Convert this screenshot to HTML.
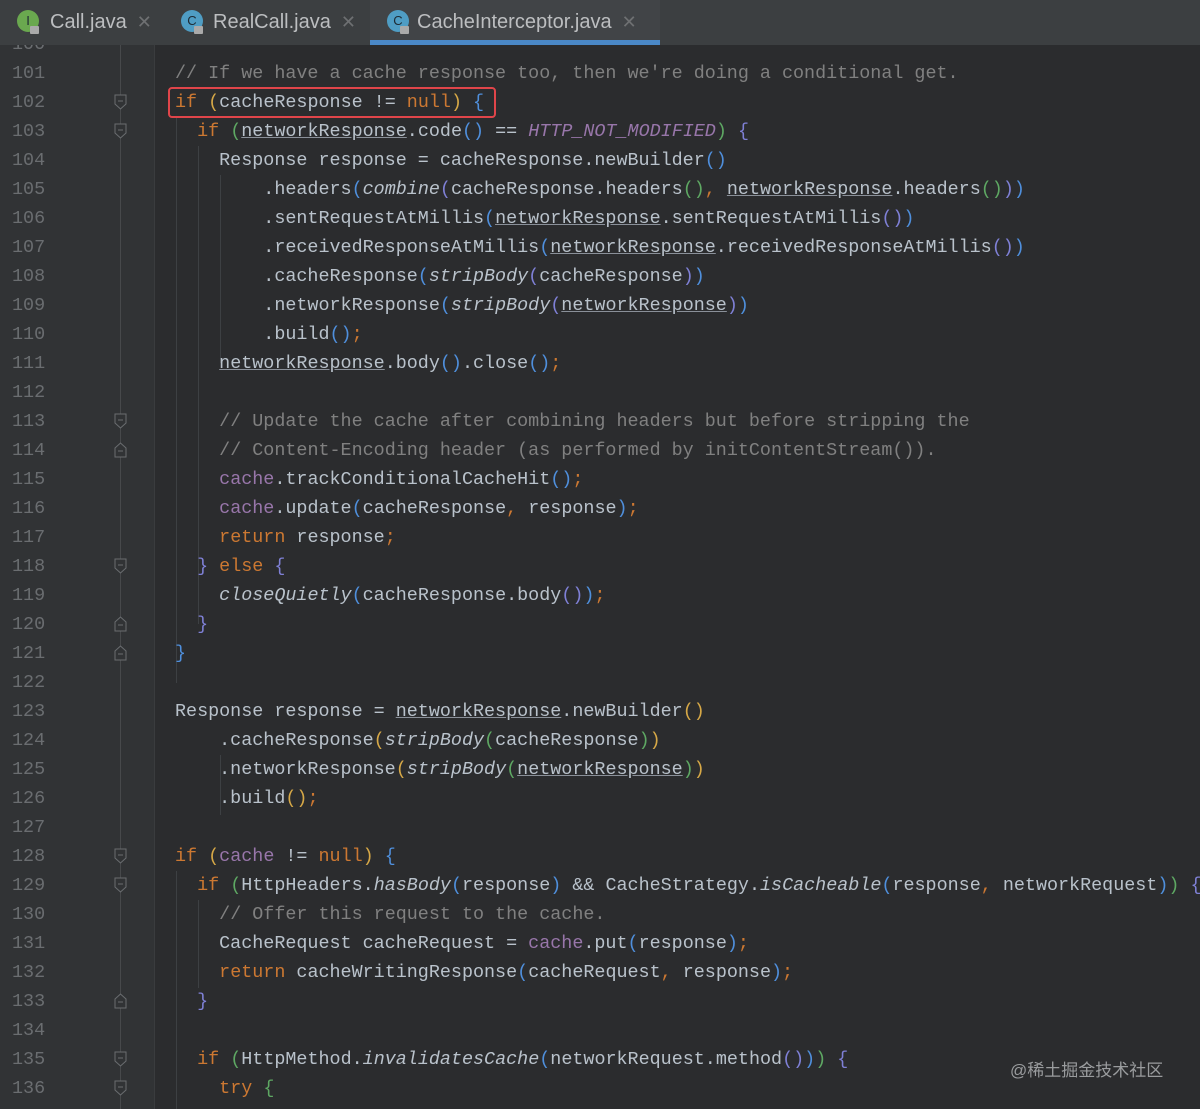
<!DOCTYPE html>
<html><head><meta charset="utf-8"><style>
*{margin:0;padding:0;box-sizing:border-box}
body{width:1200px;height:1109px;overflow:hidden;background:#2b2c2e;position:relative;font-family:"Liberation Mono",monospace}
#tabs{position:absolute;left:0;top:0;width:1200px;height:45px;background:#3c3f41;font-family:"Liberation Sans",sans-serif;font-size:20px;color:#bcbec0}
.tab{position:absolute;top:0;height:45px;line-height:44px}
.tab .x{color:#6e7072;margin-left:10px;font-size:18px}
.ic{position:absolute;top:10px;width:22px;height:22px;border-radius:50%;color:#1d2a33;font-size:13px;text-align:center;line-height:22px}
.lk{position:absolute;width:9px;height:8px;background:#aaa;border-radius:1px}
#gutter{position:absolute;left:0;top:45px;width:155px;height:1064px;background:#313335;border-right:1px solid #3a3c3e}
.ln{position:absolute;left:12px;width:40px;color:#6a6d70;font-size:18.4px;line-height:29px}
#foldline{position:absolute;left:120px;top:45px;width:1px;height:1064px;background:#47494b}
.fm{position:absolute;left:114px}
#code{position:absolute;left:175px;top:45px;width:1025px;height:1064px;overflow:hidden}
.l{position:absolute;left:0;white-space:pre;font-size:18.4px;line-height:29px;color:#b9c2cb}
.k{color:#cc7832}.c{color:#808080}.f{color:#9876aa}.cs{color:#9876aa;font-style:italic}.i{font-style:italic}
.u{text-decoration:underline;text-decoration-color:#8a9099}
.p1{color:#d6a847}.p2{color:#5ea863}.p3{color:#4f8fdc}.p4{color:#7f80d6}
.g{position:absolute;width:1px;background:#3d4043}
#box{position:absolute;left:168px;top:87px;width:328px;height:31px;border:2px solid #e0454a;border-radius:4px}
#wm{position:absolute;left:1010px;top:1056px;font-family:"Liberation Sans","Noto Sans CJK SC",sans-serif;font-size:17px;color:#9a9c9e}
#lnums{position:absolute;left:0;top:0;width:155px;height:1109px}
</style></head><body>
<div id="gutter"></div>
<div id="foldline"></div>
<div id="code">
<div class="g" style="left:1px;top:72px;height:566px"></div>
<div class="g" style="left:23px;top:101px;height:478px"></div>
<div class="g" style="left:45px;top:130px;height:188px"></div>
<div class="g" style="left:1px;top:826px;height:240px"></div>
<div class="g" style="left:23px;top:855px;height:88px"></div>
<div class="g" style="left:45px;top:710px;height:60px"></div>
<div class="l" style="top:14px"><span class="c">// If we have a cache response too, then we're doing a conditional get.</span></div>
<div class="l" style="top:43px"><span class="k">if</span> <span class="p1">(</span>cacheResponse != <span class="k">null</span><span class="p1">)</span> <span class="p3">{</span></div>
<div class="l" style="top:72px">  <span class="k">if</span> <span class="p2">(</span><span class="u">networkResponse</span>.code<span class="p3">()</span> == <span class="cs">HTTP_NOT_MODIFIED</span><span class="p2">)</span> <span class="p4">{</span></div>
<div class="l" style="top:101px">    Response response = cacheResponse.newBuilder<span class="p3">()</span></div>
<div class="l" style="top:130px">        .headers<span class="p3">(</span><span class="i">combine</span><span class="p4">(</span>cacheResponse.headers<span class="p2">()</span><span class="k">,</span> <span class="u">networkResponse</span>.headers<span class="p2">()</span><span class="p4">)</span><span class="p3">)</span></div>
<div class="l" style="top:159px">        .sentRequestAtMillis<span class="p3">(</span><span class="u">networkResponse</span>.sentRequestAtMillis<span class="p4">()</span><span class="p3">)</span></div>
<div class="l" style="top:188px">        .receivedResponseAtMillis<span class="p3">(</span><span class="u">networkResponse</span>.receivedResponseAtMillis<span class="p4">()</span><span class="p3">)</span></div>
<div class="l" style="top:217px">        .cacheResponse<span class="p3">(</span><span class="i">stripBody</span><span class="p4">(</span>cacheResponse<span class="p4">)</span><span class="p3">)</span></div>
<div class="l" style="top:246px">        .networkResponse<span class="p3">(</span><span class="i">stripBody</span><span class="p4">(</span><span class="u">networkResponse</span><span class="p4">)</span><span class="p3">)</span></div>
<div class="l" style="top:275px">        .build<span class="p3">()</span><span class="k">;</span></div>
<div class="l" style="top:304px">    <span class="u">networkResponse</span>.body<span class="p3">()</span>.close<span class="p3">()</span><span class="k">;</span></div>
<div class="l" style="top:362px">    <span class="c">// Update the cache after combining headers but before stripping the</span></div>
<div class="l" style="top:391px">    <span class="c">// Content-Encoding header (as performed by initContentStream()).</span></div>
<div class="l" style="top:420px">    <span class="f">cache</span>.trackConditionalCacheHit<span class="p3">()</span><span class="k">;</span></div>
<div class="l" style="top:449px">    <span class="f">cache</span>.update<span class="p3">(</span>cacheResponse<span class="k">,</span> response<span class="p3">)</span><span class="k">;</span></div>
<div class="l" style="top:478px">    <span class="k">return</span> response<span class="k">;</span></div>
<div class="l" style="top:507px">  <span class="p4">}</span> <span class="k">else</span> <span class="p4">{</span></div>
<div class="l" style="top:536px">    <span class="i">closeQuietly</span><span class="p3">(</span>cacheResponse.body<span class="p4">()</span><span class="p3">)</span><span class="k">;</span></div>
<div class="l" style="top:565px">  <span class="p4">}</span></div>
<div class="l" style="top:594px"><span class="p3">}</span></div>
<div class="l" style="top:652px">Response response = <span class="u">networkResponse</span>.newBuilder<span class="p1">()</span></div>
<div class="l" style="top:681px">    .cacheResponse<span class="p1">(</span><span class="i">stripBody</span><span class="p2">(</span>cacheResponse<span class="p2">)</span><span class="p1">)</span></div>
<div class="l" style="top:710px">    .networkResponse<span class="p1">(</span><span class="i">stripBody</span><span class="p2">(</span><span class="u">networkResponse</span><span class="p2">)</span><span class="p1">)</span></div>
<div class="l" style="top:739px">    .build<span class="p1">()</span><span class="k">;</span></div>
<div class="l" style="top:797px"><span class="k">if</span> <span class="p1">(</span><span class="f">cache</span> != <span class="k">null</span><span class="p1">)</span> <span class="p3">{</span></div>
<div class="l" style="top:826px">  <span class="k">if</span> <span class="p2">(</span>HttpHeaders.<span class="i">hasBody</span><span class="p3">(</span>response<span class="p3">)</span> &amp;&amp; CacheStrategy.<span class="i">isCacheable</span><span class="p3">(</span>response<span class="k">,</span> networkRequest<span class="p3">)</span><span class="p2">)</span> <span class="p4">{</span></div>
<div class="l" style="top:855px">    <span class="c">// Offer this request to the cache.</span></div>
<div class="l" style="top:884px">    CacheRequest cacheRequest = <span class="f">cache</span>.put<span class="p3">(</span>response<span class="p3">)</span><span class="k">;</span></div>
<div class="l" style="top:913px">    <span class="k">return</span> cacheWritingResponse<span class="p3">(</span>cacheRequest<span class="k">,</span> response<span class="p3">)</span><span class="k">;</span></div>
<div class="l" style="top:942px">  <span class="p4">}</span></div>
<div class="l" style="top:1000px">  <span class="k">if</span> <span class="p2">(</span>HttpMethod.<span class="i">invalidatesCache</span><span class="p3">(</span>networkRequest.method<span class="p4">()</span><span class="p3">)</span><span class="p2">)</span> <span class="p4">{</span></div>
<div class="l" style="top:1029px">    <span class="k">try</span> <span class="p2">{</span></div>
</div>
<div id="lnums"></div>
<div id="box"></div>
<div id="tabs">
 <div class="tab" style="left:0;width:170px;background:#3c3f41"><div class="ic" style="left:17px;background:#6aa84f">I</div><div class="lk" style="left:30px;top:26px"></div><span style="position:absolute;left:50px">Call.java<span class="x">✕</span></span></div>
 <div class="tab" style="left:170px;width:200px"><div class="ic" style="left:11px;background:#4f9dc4">C</div><div class="lk" style="left:24px;top:26px"></div><span style="position:absolute;left:43px">RealCall.java<span class="x">✕</span></span></div>
 <div class="tab" style="left:370px;width:290px;background:#414447"><div class="ic" style="left:17px;background:#4f9dc4">C</div><div class="lk" style="left:30px;top:26px"></div><span style="position:absolute;left:47px">CacheInterceptor.java<span class="x">✕</span></span><div style="position:absolute;left:0;top:40px;width:290px;height:5px;background:#4a88c7"></div></div>
</div>
<div id="wm">@稀土掘金技术社区</div>
<script>
var g=document.getElementById('lnums'),h='';
for(var n=100;n<=136;n++){var t=59+(n-101)*29;h+='<div class="ln" style="top:'+t+'px">'+n+'</div>';}
var down=[102,103,113,118,128,129,135,136],up=[114,120,121,133];
down.forEach(function(n){var y=73+(n-101)*29-8;h+='<svg class="fm" style="top:'+y+'px" width="13" height="16"><path d="M1 1H12V10L6.5 15L1 10Z" fill="#313335" stroke="#6a6d70"/><path d="M4 7H9" stroke="#6a6d70"/></svg>';});
up.forEach(function(n){var y=73+(n-101)*29-8;h+='<svg class="fm" style="top:'+y+'px" width="13" height="16"><path d="M1 15H12V6L6.5 1L1 6Z" fill="#313335" stroke="#6a6d70"/><path d="M4 9H9" stroke="#6a6d70"/></svg>';});
g.innerHTML=h;
</script>
</body></html>
